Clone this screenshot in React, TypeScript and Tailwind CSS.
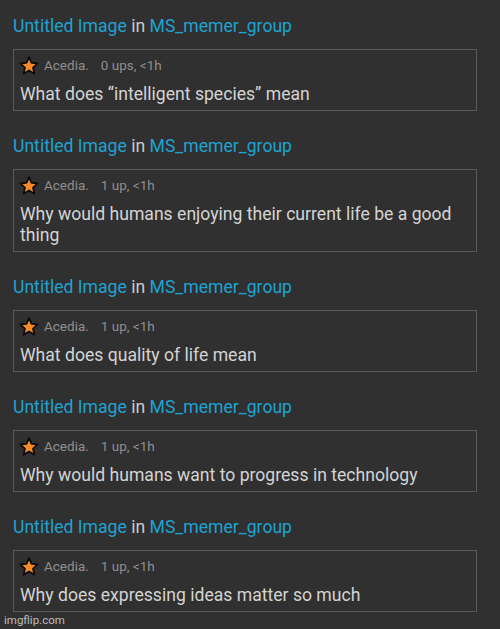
import React from "react";

const items = [
  { ups: "0 ups, <1h", text: "What does \u201cintelligent species\u201d mean" },
  { ups: "1 up, <1h", text: "Why would humans enjoying their current life be a good thing" },
  { ups: "1 up, <1h", text: "What does quality of life mean" },
  { ups: "1 up, <1h", text: "Why would humans want to progress in technology" },
  { ups: "1 up, <1h", text: "Why does expressing ideas matter so much" },
];

function Star() {
  return (
    <svg width="20" height="19" viewBox="0 0 24 23" className="shrink-0 -ml-[1px]">
      <path
        d="M12 1.4l3.1 6.8 7.4.8-5.6 5 1.6 7.4L12 17.6l-6.5 3.8 1.6-7.4-5.6-5 7.4-.8z"
        fill="#f58a2b"
        stroke="#0d0d0d"
        strokeWidth="2.2"
        strokeLinejoin="round"
      />
    </svg>
  );
}

export default function App() {
  return (
    <div
      className="w-[500px] h-[629px] bg-[#303030] relative overflow-hidden"
      style={{ fontFamily: "Roboto, 'Liberation Sans', sans-serif" }}
    >
      <div className="flex flex-col gap-[25px] px-[13px] pt-[16px] w-[490px]">
        {items.map((it, i) => (
          <div key={i} className="flex flex-col gap-[13px]">
            <div className="text-[17.6px] leading-[20px] text-[#c9c9c9]">
              <span className="text-[#1ea2d2]">Untitled Image</span> in{" "}
              <span className="text-[#1ea2d2]">MS_memer_group</span>
            </div>
            <div className="border border-[#5a5a5a] pl-[6px] pr-[10px] pt-[7px] pb-[5px] flex flex-col gap-[11px]">
              <div className="flex items-center h-[16px] text-[13.5px] text-[#8f8f8f]">
                <Star />
                <span className="ml-[5px]">Acedia.</span>
                <span className="ml-[12px]">{it.ups}</span>
              </div>
              <div className="text-[17.6px] leading-[21px] text-[#d4d4d4]">{it.text}</div>
            </div>
          </div>
        ))}
      </div>
      <div className="absolute left-[4px] top-[612px] text-[11.5px] leading-[16px] text-[#bdbdbd]">
        imgflip.com
      </div>
    </div>
  );
}
